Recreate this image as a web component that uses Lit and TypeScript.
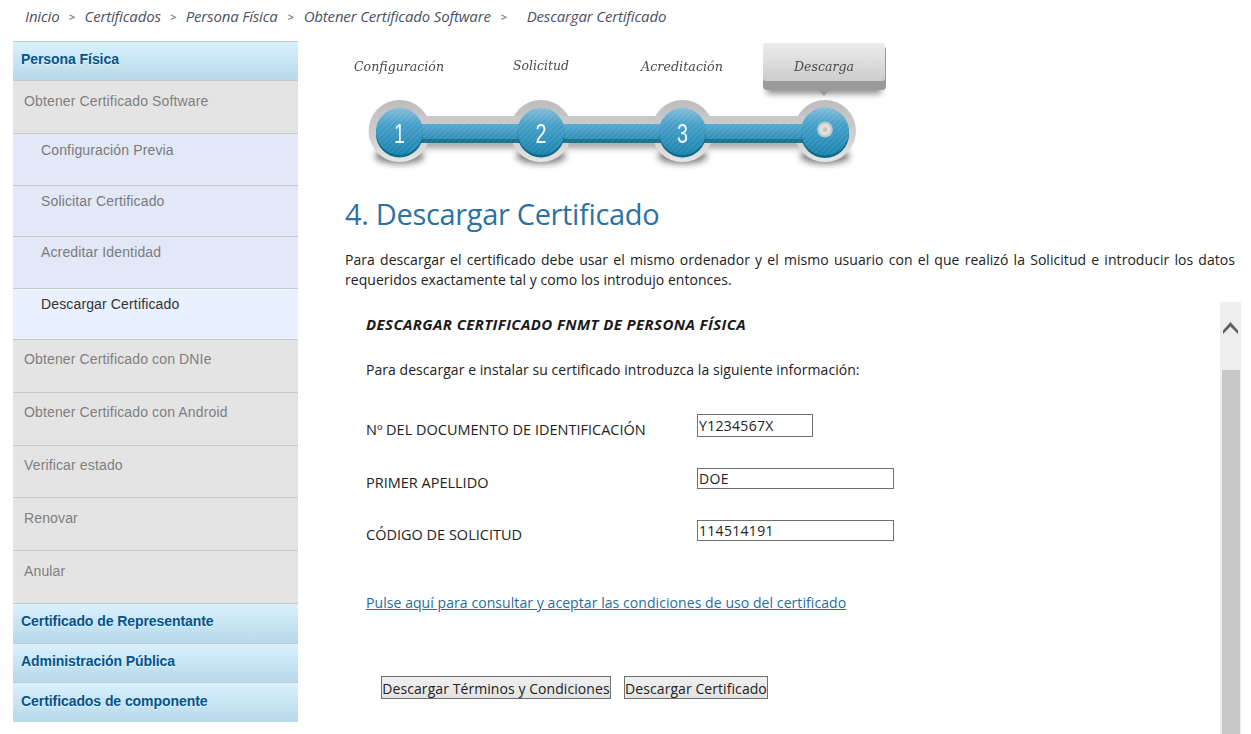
import { LitElement, html, css, svg } from "lit";
import { customElement } from "lit/decorators.js";

const crumbs = ["Inicio", "Certificados", "Persona Física", "Obtener Certificado Software", "Descargar Certificado"];

type Row = { t: string; k: "head" | "item" | "sub" | "active"; h: number; p: number };
const rows: Row[] = [
  { t: "Persona Física", k: "head", h: 40, p: 9 },
  { t: "Obtener Certificado Software", k: "item", h: 53, p: 12 },
  { t: "Configuración Previa", k: "sub", h: 52, p: 8 },
  { t: "Solicitar Certificado", k: "sub", h: 51, p: 7 },
  { t: "Acreditar Identidad", k: "sub", h: 52, p: 7 },
  { t: "Descargar Certificado", k: "active", h: 51, p: 7 },
  { t: "Obtener Certificado con DNIe", k: "item", h: 53, p: 11 },
  { t: "Obtener Certificado con Android", k: "item", h: 53, p: 11 },
  { t: "Verificar estado", k: "item", h: 52, p: 11 },
  { t: "Renovar", k: "item", h: 53, p: 12 },
  { t: "Anular", k: "item", h: 53, p: 12 },
  { t: "Certificado de Representante", k: "head", h: 40, p: 9 },
  { t: "Administración Pública", k: "head", h: 39, p: 9 },
  { t: "Certificados de componente", k: "head", h: 39, p: 10 },
];

const nodes = [
  { x: 399.5, d: "1" },
  { x: 541, d: "2" },
  { x: 682.5, d: "3" },
];
const allX = [399.5, 541, 682.5, 825];
const labels = [
  { x: 354, w: 90, y: 71, t: "Configuración" },
  { x: 513, w: 56, y: 70, t: "Solicitud" },
  { x: 641, w: 82, y: 71, t: "Acreditación" },
  { x: 794, w: 60, y: 71, t: "Descarga" },
];

const stepper = svg`
  <defs>
    <pattern id="st" width="4" height="4" patternUnits="userSpaceOnUse" patternTransform="rotate(45)">
      <rect width="1.4" height="4" fill="#fff" fill-opacity=".1"/>
    </pattern>
    <linearGradient id="ball" x1="0" y1="0" x2="0" y2="1">
      <stop offset="0" stop-color="#83bdd9"/>
      <stop offset=".35" stop-color="#459fc9"/>
      <stop offset=".75" stop-color="#2a8db8"/>
      <stop offset="1" stop-color="#1784ad"/>
    </linearGradient>
    <linearGradient id="barg" x1="0" y1="0" x2="0" y2="1">
      <stop offset="0" stop-color="#56a9cf"/>
      <stop offset="1" stop-color="#2e8db6"/>
    </linearGradient>
    <linearGradient id="halo" x1="0" y1="0" x2="0" y2="1">
      <stop offset="0" stop-color="#bdbdbd"/>
      <stop offset=".6" stop-color="#cfcfcf"/>
      <stop offset="1" stop-color="#e6e6e6"/>
    </linearGradient>
    <linearGradient id="tip" x1="0" y1="0" x2="0" y2="1">
      <stop offset="0" stop-color="#ececec"/>
      <stop offset="1" stop-color="#cdcdcd"/>
    </linearGradient>
    <radialGradient id="knob">
      <stop offset="0" stop-color="#b4b4b4"/>
      <stop offset=".5" stop-color="#e6e6e6"/>
      <stop offset="1" stop-color="#a9bcc5"/>
    </radialGradient>
    <filter id="soft" x="-5%" y="-5%" width="110%" height="110%"><feGaussianBlur stdDeviation=".45"/></filter>
    <filter id="sh" x="-40%" y="-60%" width="180%" height="220%"><feGaussianBlur stdDeviation="3"/></filter>
  </defs>
  <g filter="url(#soft)">
    <rect x="400" y="139" width="424" height="9" fill="#555" opacity=".55" filter="url(#sh)"/>
    ${allX.map((x) => svg`
      <ellipse cx=${x} cy="156" rx="25" ry="8" fill="#333" opacity=".6" filter="url(#sh)"/>
      <circle cx=${x} cy="131" r="31" fill="url(#halo)"/>`)}
    <rect x="400" y="116" width="424" height="26" fill="#c9c9c9"/>
    <rect x="400" y="124" width="424" height="19" fill="#14708f"/>
    <rect x="400" y="124" width="424" height="15" fill="url(#barg)"/>
    <rect x="400" y="124" width="424" height="19" fill="url(#st)"/>
    ${allX.map((x, i) => svg`
      <circle cx=${x} cy="134" r=${i === 3 ? 24 : 23.5} fill="#0f6a88"/>
      <circle cx=${x} cy="131.5" r=${i === 3 ? 24 : 23.5} fill="url(#ball)"/>
      <circle cx=${x} cy="131.5" r=${i === 3 ? 24 : 23.5} fill="url(#st)"/>`)}
    <rect x="767" y="84" width="114" height="10" fill="#444" opacity=".6" filter="url(#sh)"/>
    <rect x="763" y="46" width="123" height="44" rx="4" fill="#9a9a9a"/>
    <path d="M818 89h12l-6 7z" fill="#9a9a9a"/>
    <rect x="763" y="43" width="122" height="38" rx="3" fill="url(#tip)"/>
    <circle cx="825" cy="129.5" r="8" fill="url(#knob)"/>
    ${nodes.map((n) => svg`<text class="digit" x=${n.x} y="143" text-anchor="middle" textLength="11" lengthAdjust="spacingAndGlyphs">${n.d}</text>`)}
    ${labels.map((l) => svg`<text class="lab" x=${l.x} y=${l.y} textLength=${l.w} lengthAdjust="spacingAndGlyphs">${l.t}</text>`)}
  </g>
`;

@customElement("app-root")
export class AppRoot extends LitElement {
  static styles = css`
    :host {
      display: block;
      width: 1251px;
      height: 734px;
      overflow: hidden;
      background: #fff;
      font-family: "Open Sans", "Noto Sans", sans-serif;
      color: #222;
    }
    .crumbs {
      display: flex;
      align-items: center;
      height: 41px;
      box-sizing: border-box;
      padding: 0 0 9px 25px;
      font-style: italic;
      font-size: 15px;
      letter-spacing: -0.17px;
      color: #4b5268;
    }
    .sep {
      width: 25px;
      text-align: center;
      font-style: normal;
      font-weight: 700;
      font-size: 11px;
      color: #888;
    }
    .sep.s3 { width: 26px; }
    .sep.s4 { width: 36px; padding-right: 10px; box-sizing: border-box; }
    .main { display: flex; align-items: flex-start; padding-left: 13px; }
    .side {
      flex: none;
      width: 285px;
      display: flex;
      flex-direction: column;
      font-family: "Liberation Sans", Arial, sans-serif;
      font-size: 14px;
      letter-spacing: 0.14px;
    }
    .row { box-sizing: border-box; border-bottom: 1px solid #c9c9c9; }
    .head {
      padding: 0 8px;
      font-weight: 700;
      letter-spacing: -0.07px;
      color: #04548c;
      background: linear-gradient(#d9f1fd, #b6d9eb);
      text-shadow: 0 1px 1px rgba(255, 255, 255, .6);
    }
    .head:first-child { border-top: 1px solid #c9c9c9; }
    .head:last-child { border-bottom: 0; }
    .item { padding: 0 11px; color: #7f7f7f; background: #e4e4e4; }
    .sub { padding: 0 28px; color: #777b80; background: #e3e8f6; }
    .active { padding: 0 28px; color: #333; background: #e9f1fe; }
    .content { flex: none; width: 896px; margin-left: 47px; display: flex; flex-direction: column; }
    .stepper { display: block; width: 555px; height: 135px; margin-top: -3px; }
    .digit {
      font-family: "Liberation Sans", sans-serif;
      font-size: 28px;
      fill: #f4f8fa;
    }
    .lab {
      font-family: "DejaVu Serif", serif;
      font-style: italic;
      font-size: 13px;
      fill: #4a4a4a;
    }
    h1 {
      margin: 21px 0 0;
      font-size: 29px;
      line-height: 40px;
      font-weight: 400;
      letter-spacing: -0.33px;
      color: #2a72a5;
    }
    .intro {
      margin: 16px 6px 0 0;
      font-size: 14px;
      line-height: 19.5px;
      letter-spacing: 0.05px;
      text-align: justify;
      color: #222;
    }
    .panel { display: flex; height: 432px; margin-top: 13px; }
    .form { flex: 1; min-width: 0; padding: 12px 0 0 21px; font-size: 14px; letter-spacing: 0.05px; }
    .title { margin: 0; font-size: 15px; line-height: 20px; font-weight: 700; font-style: italic; letter-spacing: 0.39px; color: #1a1a1a; }
    .lead { margin: 26px 0 0; line-height: 20px; }
    .fields { display: grid; grid-template-columns: 331px 1fr; margin-top: 24px; }
    label { display: block; box-sizing: border-box; line-height: 20px; font-size: 14.5px; letter-spacing: 0; }
    .f1 { padding-top: 16px; height: 54px; }
    .f2 { padding-top: 15px; height: 52px; }
    .cell { padding-top: 10px; }
    input {
      display: block;
      box-sizing: border-box;
      font: inherit;
      letter-spacing: 0.3px;
      color: #222;
      padding: 0 1px;
      margin: 0;
      border: 1px solid #707070;
      border-radius: 0;
      background: #fff;
      outline: none;
    }
    .short { width: 116px; height: 23px; }
    .long { width: 197px; height: 21px; }
    .link { display: inline-block; margin-top: 31px; line-height: 20px; letter-spacing: 0.07px; color: #1f6d9c; text-decoration: underline; }
    .buttons { display: flex; gap: 13px; margin: 63px 0 0 15px; }
    button {
      box-sizing: border-box;
      height: 23px;
      padding: 1px 0 0;
      font: inherit;
      letter-spacing: 0.07px;
      color: #222;
      border: 1px solid #707070;
      border-radius: 0;
      background: linear-gradient(#f0f0f0, #e3e3e3);
    }
    .b1 { width: 230px; }
    .b2 { width: 144px; }
    .scrollbar {
      flex: none;
      width: 21px;
      background: #eeeeee;
      display: flex;
      flex-direction: column;
      align-items: center;
    }
    .arrow { display: block; margin-top: 20px; width: 15px; height: 12px; }
    .thumb { width: 18px; flex: 1; margin-top: 36px; background: #c8c8c8; }
  `;

  render() {
    return html`
      <nav class="crumbs">
        ${crumbs.map((c, i) => html`
          ${i > 0 ? html`<span class="sep s${i}">&gt;</span>` : ""}<span>${c}</span>`)}
      </nav>
      <div class="main">
        <aside class="side">
          ${rows.map((r) => html`<div class="row ${r.k}" style="height:${r.h}px;padding-top:${r.p}px">${r.t}</div>`)}
        </aside>
        <section class="content">
          <svg class="stepper" viewBox="345 38 555 135" role="img" aria-label="Pasos">${stepper}</svg>
          <h1>4. Descargar Certificado</h1>
          <p class="intro">Para descargar el certificado debe usar el mismo ordenador y el mismo usuario con el que realizó la Solicitud e introducir los datos requeridos exactamente tal y como los introdujo entonces.</p>
          <div class="panel">
            <div class="form">
              <p class="title">DESCARGAR CERTIFICADO FNMT DE PERSONA FÍSICA</p>
              <p class="lead">Para descargar e instalar su certificado introduzca la siguiente información:</p>
              <div class="fields">
                <label class="f1">Nº DEL DOCUMENTO DE IDENTIFICACIÓN</label>
                <div class="cell"><input class="short" .value=${"Y1234567X"} /></div>
                <label class="f2">PRIMER APELLIDO</label>
                <div class="cell"><input class="long" .value=${"DOE"} /></div>
                <label class="f2">CÓDIGO DE SOLICITUD</label>
                <div class="cell"><input class="long" .value=${"114514191"} /></div>
              </div>
              <a class="link" href="#">Pulse aquí para consultar y aceptar las condiciones de uso del certificado</a>
              <div class="buttons">
                <button class="b1">Descargar Términos y Condiciones</button>
                <button class="b2">Descargar Certificado</button>
              </div>
            </div>
            <div class="scrollbar">
              <svg class="arrow" viewBox="0 0 15 12"><path d="M0 8.5 7.5 0 15 8.5V12L7.5 4.5 0 12z" fill="#606060"/></svg>
              <div class="thumb"></div>
            </div>
          </div>
        </section>
      </div>
    `;
  }
}
